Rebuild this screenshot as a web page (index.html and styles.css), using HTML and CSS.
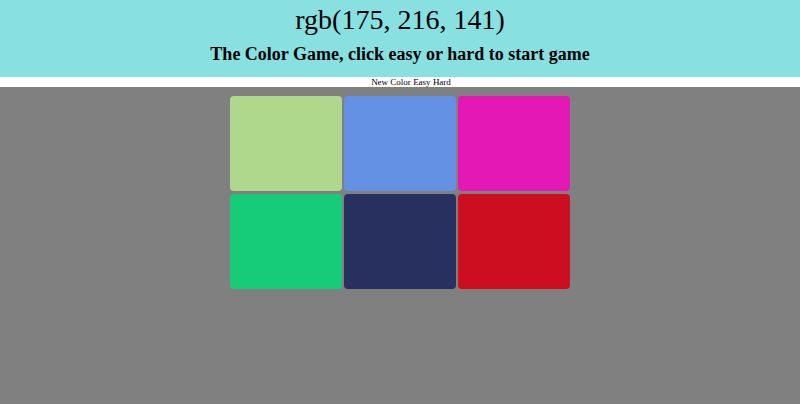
FILE: index.html
```html
<!DOCTYPE html>
<html>
<head>
<meta charset="utf-8">
<link rel="stylesheet" href="styles.css">
</head>
<body>
<div class="header">
  <h1 class="rgb">rgb(175, 216, 141)</h1>
  <h2 class="title">The Color Game, click easy or hard to start game</h2>
</div>
<div class="stripe">
  <span class="message"></span><span class="btn">New Color</span> <span class="btn">Easy</span> <span class="btn">Hard</span>
</div>
<div class="board">
  <div class="grid">
    <div class="square" style="background: rgb(175, 216, 141)"></div>
    <div class="square" style="background: rgb(100, 145, 227)"></div>
    <div class="square" style="background: rgb(227, 24, 181)"></div>
    <div class="square" style="background: rgb(23, 204, 120)"></div>
    <div class="square" style="background: rgb(40, 48, 96)"></div>
    <div class="square" style="background: rgb(204, 14, 32)"></div>
  </div>
</div>
</body>
</html>
```
FILE: styles.css
```css
html, body {
  margin: 0;
  padding: 0;
  height: 100%;
}
body {
  font-family: "Liberation Serif", serif;
  background: #808080;
  display: flex;
  flex-direction: column;
}
.header {
  background: #88e0e0;
  text-align: center;
  padding: 4px 0 11px;
}
.rgb {
  margin: 0;
  font-size: 28px;
  font-weight: normal;
  line-height: 32px;
}
.title {
  margin: 6px 0 0;
  font-size: 18px;
  font-weight: bold;
  line-height: 24px;
}
.stripe {
  background: #fff;
  text-align: center;
  height: 10px;
  line-height: 10px;
  font-size: 9px;
}
.message {
  display: inline-block;
  width: 22px;
}
.btn {
  color: #000;
  cursor: pointer;
}
.board {
  flex: 1;
  background: #808080;
  padding-top: 9px;
}
.grid {
  width: 340px;
  margin: 0 auto;
  display: grid;
  grid-template-columns: repeat(3, 112px);
  grid-auto-rows: 95px;
  column-gap: 2px;
  row-gap: 3px;
}
.square {
  border-radius: 4px;
}
```
